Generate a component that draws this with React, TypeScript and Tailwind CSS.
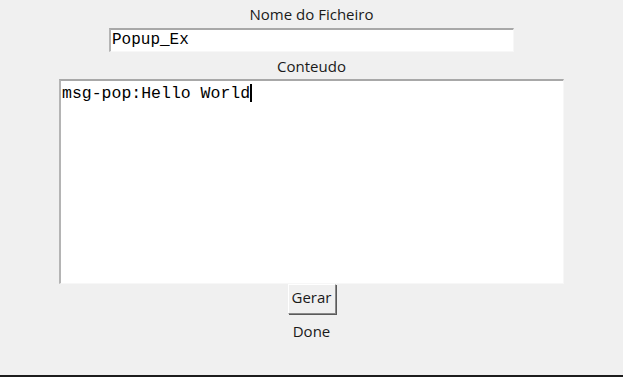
export default function App() {
  const ui = { fontFamily: '"Open Sans", "Noto Sans", sans-serif' };
  const mono = { fontFamily: '"Liberation Mono", "Courier New", monospace' };

  return (
    <div className="h-screen w-full bg-[#f0f0f0] border-b-2 border-[#1c1c1c] flex flex-col items-center text-[#1a1a1a]" style={ui}>
      <div className="h-[28px] pt-[4px] text-[15px] leading-[20px]">Nome do Ficheiro</div>
      <div
        className="w-[405px] h-[24px] bg-white border-t-2 border-l-2 border-t-[#a8a8a8] border-l-[#b4b4b4] border-r border-b border-r-[#f7f7f7] border-b-[#f7f7f7] text-[16px] leading-[20px] pl-[1px] text-black"
        style={mono}
      >
        Popup_Ex
      </div>
      <div className="h-[27px] text-[15px] leading-[27px] pt-[1px]">Conteudo</div>
      <div
        className="w-[505px] h-[205px] bg-white border-t-2 border-l-2 border-t-[#a8a8a8] border-l-[#b4b4b4] border-r border-b border-r-[#f7f7f7] border-b-[#f7f7f7] text-[16.5px] leading-[20px] pl-[1px] pt-[3px] text-black"
        style={mono}
      >
        msg-pop:Hello World<span className="inline-block w-[2px] h-[18px] bg-black align-[-4px]"></span>
      </div>
      <button
        className="w-[48px] h-[30px] bg-[#f0f0f0] border border-t-white border-l-white border-r-[#8a8a8a] border-b-[#8a8a8a] shadow-[1px_1px_0_#5a5a5a] text-[15px] leading-[20px] pb-[4px]"
        style={ui}
      >
        Gerar
      </button>
      <div className="h-[34px] text-[15px] leading-[34px]">Done</div>
    </div>
  );
}
